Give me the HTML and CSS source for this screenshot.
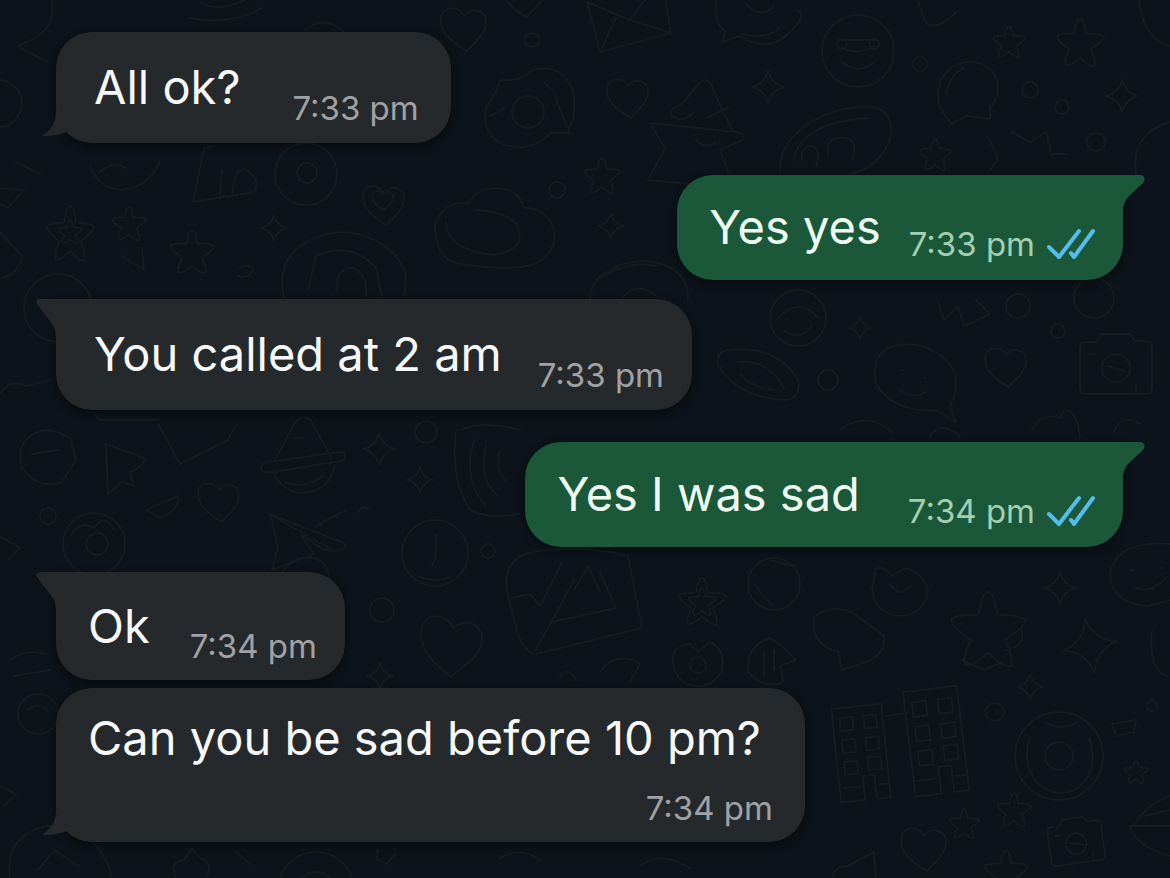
FILE: index.html
```html
<!DOCTYPE html>
<html lang="en">
  <head>
    <meta charset="UTF-8" />
    <meta name="viewport" content="width=device-width, initial-scale=1.0" />
    <title>Chat</title>
    <link rel="stylesheet" href="styles.css">
  </head>
  <body>
    <!-- Doodle wallpaper -->
    <svg class="wallpaper" viewBox="0 0 1170 878" preserveAspectRatio="xMidYMid slice" aria-hidden="true">
      <defs>
        <path id="star" d="M0-20Q3-20 5-8Q17-8 20-5Q20-2 9 5Q14 16 12 19Q8 20 0 12Q-9 20-12 18Q-14 16-9 5Q-20-2-19-6Q-16-8-5-8Q-3-20 0-20Z" />
        <path id="sparkle" d="M0-16Q3-3 16 0Q3 3 0 16Q-3 3-16 0Q-3-3 0-16Z" />
        <path id="heart" d="M3 21C-10 14-22 4-21-8C-20-20-5-21 0-11C6-20 21-17 20-4C19 7 8 14 3 21Z" />
        <path id="cloud" d="M-58 8C-64-12-44-28-26-24C-16-46 24-46 30-20C54-22 70 6 54 26C40 46-6 40-34 36C-48 34-56 24-58 8Z" />
        <g id="donut">
          <circle r="44" />
          <path d="M-30-16C-38 12-22 36 2 37C28 36 40 8 30-17M-14-34Q2-24 18-34" />
          <circle r="14" />
        </g>
        <g id="camera">
          <path d="M-36-18Q-36-24-30-24H-19L-15-32H14L19-25H30Q36-24 36-18V22Q36 28 30 28H-30Q-36 28-36 22Z" />
          <circle r="14" cy="2" />
          <path d="M-9 0L9 5M20 18V26M-27-12H-20" />
        </g>
        <g id="smile">
          <path d="M-38-22C-28-42 12-40 32-18C48 2 36 20 34 28L40 42L20 30C-10 34-54 14-38-22Z" />
          <path d="M-14-10h2M8-2h2M-16 10Q-2 20 10 12" />
        </g>
        <g id="clock">
          <circle r="33" />
          <path d="M1-18V4L-3 12M-16 24Q0 30 16 24" />
        </g>
        <g id="plane">
          <path d="M-38-36L38-6Q36 4 16 0L-8-16L6 4L-36 20L-30-4Z" />
          <path d="M-38-36L24 0" />
        </g>
        <g id="planet">
          <path d="M-28-4Q-18-22-9-40Q0-52 9-42L29-5M-29 6C-24 36 24 38 32 2" />
          <path d="M-42 4Q-42-2-28-3L36-12Q44-12 42-6Q40-2 30-2L-28 8Q-42 10-42 4Z" />
          <path d="M-18 18Q0 26 20 12M-8-26h8" />
        </g>
        <g id="block">
          <path d="M-26-46H24V48H10V24H-2V48H-26Z" />
          <path d="M-19-36h13v13h-13ZM5-36h13v13h-13ZM-19-14h13v13h-13ZM5-14h13v13h-13ZM-19 8h13v13h-13ZM5 6h13v13h-13ZM-24 34h18M14 34h10" />
        </g>
      </defs>

      <g class="doodles">
        <!-- top edge -->
        <path d="M50-8Q62 30 22 44Q14 46 28 52L48 62M190 18Q230 26 262 8M200 2Q220 14 248-2M305 30Q324 14 344 32" />
        <use href="#heart" transform="translate(464 28) scale(1.1)" />
        <use href="#heart" transform="translate(524 -4)" />
        <path d="M587 2L600 52L671 33L665-4M587 2L630 20L648-4M630 20L671 33M616 18L602 48" />
        <path d="M716 2Q714 26 726 31L722 42L740 36Q770 56 794 28Q806 16 798 10M746 4Q760 20 774 6M742 34Q766 40 780 28" />
        <circle cx="858" cy="51" r="36" />
        <path d="M842 40H876M842 48Q858 56 874 46M842 62Q858 76 874 62" />
        <circle cx="842" cy="44" r="5" />
        <circle cx="874" cy="44" r="5" />
        <path d="M918 0L926 24Q940 30 956 12M1139 0Q1144 40 1170 46" />
        <use href="#star" transform="translate(1009 42) scale(.8)" />
        <use href="#star" transform="translate(1080 43) scale(1.2)" />
        <circle cx="920" cy="64" r="7" />
        <circle cx="532" cy="40" r="7" />
        <circle cx="1030" cy="90" r="8" />
        <circle cx="1062" cy="107" r="7" />
        <circle cx="557" cy="190" r="8" />
        <path d="M950 122C924 94 944 60 972 62C1000 64 1004 94 990 108L990 119L966 116L951 124ZM946 94Q950 74 964 68" />

        <!-- upper middle -->
        <path d="M496 92L500 80Q522 82 532 70Q566 62 574 96Q576 122 568 128L570 133H550C530 158 478 150 486 108Z" />
        <circle cx="528" cy="112" r="16" />
        <path d="M554 94L566 124M544 82L552 90M490 116L504 108" />
        <use href="#heart" transform="translate(628 97)" />
        <path d="M672 116Q668 108 680 106L700 82Q710 76 714 92L732 130M672 116Q682 124 694 112M706 118L728 108" />
        <path d="M650 123L736 132Q750 136 738 142L720 150L728 172M650 123L665 148L648 180L690 184M696 140Q706 150 716 142" />
        <use href="#sparkle" transform="translate(768 87)" />
        <use href="#star" transform="translate(602 176) scale(.9)" />
        <use href="#sparkle" transform="translate(611 226) scale(.8)" />
        <path d="M780 172C776 130 838 100 878 108C906 122 886 168 850 174M794 160Q800 122 870 118M802 160Q800 146 812 146Q822 150 816 166M828 154Q826 136 844 138Q860 140 852 160" />
        <use href="#sparkle" transform="translate(1122 96)" />
        <use href="#star" transform="translate(935 155) scale(.8)" />
        <circle cx="1096" cy="142" r="9" />
        <path d="M1012 132L1030 142L1046 132L1052 156M1170 122Q1130 134 1136 174M990 140L998 160L990 170M1054 154L1066 154" />
        <use href="#cloud" transform="translate(494 228)" />
        <path d="M446 222Q446 250 494 255Q526 250 518 226Q508 212 476 210" />

        <!-- upper left -->
        <path d="M0 80Q20 82 22 104Q18 126 0 127M16 162L40 174M0 188L24 190L8 208L0 204M0 232L22 256Q18 274 2 278" />
        <path d="M90 166Q98 188 122 190Q152 186 160 160M100 172Q112 160 126 168M204 148L193 202L254 192Q262 180 246 170Q236 166 232 194M204 148L214 146M222 170L220 194" />
        <circle cx="306" cy="174" r="31" />
        <circle cx="307" cy="173" r="10" />
        <use href="#heart" transform="translate(384 204)" />
        <use href="#heart" transform="translate(383 200) scale(.5)" />
        <use href="#star" transform="translate(70 234) scale(1.2 1.4)" />
        <use href="#star" transform="translate(70 232) scale(.6)" />
        <use href="#star" transform="translate(129 224) scale(.85)" />
        <use href="#star" transform="translate(192 252) scale(1.1)" />
        <use href="#sparkle" transform="translate(274 228) scale(.8)" />
        <path d="M122 256L144 270L142 248M240 268Q248 262 254 270Q246 280 238 276" />
        <path d="M284 298Q276 260 304 244Q340 222 374 240Q414 260 404 296M308 290L316 256Q350 240 376 268L382 298M336 292Q336 266 354 268Q368 276 366 296" />
        <circle cx="58" cy="308" r="34" />

        <!-- middle band -->
        <path d="M590 304C584 254 690 242 688 300M604 276Q630 260 656 266M622 298Q636 280 656 296" />
        <circle cx="798" cy="318" r="28" />
        <path d="M778 318Q800 296 818 318M784 330Q800 342 812 326" />
        <path d="M728 350Q776 344 798 380Q802 398 786 400Q736 398 718 364Q716 352 728 350ZM738 362Q770 360 784 388M740 374Q752 388 774 390" />
        <circle cx="828" cy="380" r="10" />
        <use href="#sparkle" transform="translate(860 328) scale(.7)" />
        <path d="M938 302L944 320L958 306L964 326L990 314L976 300" />
        <circle cx="1018" cy="306" r="12" />
        <circle cx="1058" cy="331" r="7" />
        <circle cx="1094" cy="298" r="20" />
        <use href="#smile" transform="translate(916 380)" />
        <use href="#heart" transform="translate(1006 366)" />
        <use href="#camera" transform="translate(1116 366)" />
        <path d="M1032 430Q1040 412 1060 418Q1068 400 1078 424L1080 438M1114 432Q1120 412 1140 424M0 394Q10 378 26 386L52 380" />
        <path d="M840 430Q868 410 892 432M930 436Q940 420 960 436" />

        <!-- lower left -->
        <path d="M30 436Q46 424 70 438L76 460L62 482Q38 490 22 468Q16 448 30 436ZM32 454L58 450" />
        <path d="M106 444L144 458Q146 464 130 472L134 486L122 482L108 494ZM158 424L180 464L228 440L234 428M92 412L100 420H158" />
        <use href="#planet" transform="translate(303 464)" />
        <use href="#sparkle" transform="translate(379 449)" />
        <use href="#heart" transform="translate(219 501)" />
        <path d="M146 510L178 496Q180 510 160 518Z" />
        <use href="#sparkle" transform="translate(420 480) scale(.8)" />
        <circle cx="426" cy="432" r="11" />
        <path d="M456 430Q450 480 470 510Q490 520 520 514M462 430Q480 420 520 430M474 440Q462 480 486 506M486 446Q478 480 498 496M500 450Q494 466 506 482" />
        <circle cx="48" cy="516" r="8" />
        <circle cx="94" cy="544" r="31" />
        <circle cx="97" cy="544" r="11" />
        <path d="M70 536Q80 520 94 528Q104 512 114 530M0 536L20 548L8 560" />
        <use href="#plane" transform="translate(308 550)" />
        <path d="M316 526L346 510M358 512Q362 504 370 510M282 572Q296 552 320 560Q332 570 328 584" />
        <use href="#clock" transform="translate(435 553)" />
        <circle cx="488" cy="551" r="7" />
        <circle cx="382" cy="610" r="12" />
        <use href="#heart" transform="translate(451 645) rotate(8) scale(1.5)" />
        <path d="M10 660Q26 648 44 654M14 676L50 670" />
        <use href="#sparkle" transform="translate(380 676) scale(.8)" />

        <!-- lower middle -->
        <path d="M508 596Q500 560 532 552Q580 544 628 556L642 628L536 654Q520 652 514 618ZM536 650L574 580M552 622L616 608L600 572M512 598L530 594L540 606L562 562M574 590L588 566L600 592" />
        <use href="#star" transform="translate(702 602) scale(1.2)" />
        <use href="#star" transform="translate(702 602) scale(.7)" />
        <circle cx="774" cy="584" r="26" />
        <path d="M754 584Q764 598 772 604M770 560L794 566" />
        <path d="M674 668Q668 646 690 644L698 652L710 642Q726 650 722 670Q714 686 698 686Q680 686 674 668Z" />
        <circle cx="698" cy="665" r="8" />
        <path d="M748 672Q746 646 770 638L784 648L796 660L780 666L784 682Q764 690 748 672ZM764 652V676M774 650V670" />
        <path d="M600 672Q616 650 640 664L630 682M560 678Q566 664 576 680" />

        <!-- lower right -->
        <path d="M876 568Q884 566 892 576L906 568Q924 574 928 590Q926 614 900 616Q874 614 872 588ZM890 584Q900 600 912 584" />
        <path d="M814 618Q826 604 852 612L884 636Q886 654 866 662L842 670L838 652Q810 644 814 618Z" />
        <use href="#star" transform="translate(988 630) scale(1.9)" />
        <path d="M1022 630Q1026 646 1006 650M962 660L984 670L1002 662" />
        <use href="#sparkle" transform="translate(1060 588)" />
        <use href="#sparkle" transform="translate(1090 646) rotate(-10) scale(1.7)" />
        <path d="M1170 544Q1116 540 1110 574Q1112 604 1148 606L1170 600M1134 586Q1148 596 1166 578M1130 570h4M1160 568h4M1152 630Q1148 668 1166 676" />
        <use href="#sparkle" transform="translate(1030 687) scale(.8)" />
        <circle cx="995" cy="712" r="9" />
        <circle cx="1152" cy="706" r="5" />
        <use href="#block" transform="translate(862 752) rotate(-6)" />
        <use href="#block" transform="translate(937 740) rotate(-7) scale(1.08 1.12)" />
        <path d="M886 716L908 713" />
        <use href="#donut" transform="translate(1059 756)" />
        <path d="M1112 724L1136 720L1134 732L1116 736Z" />
        <use href="#star" transform="translate(1136 772) scale(.6)" />
        <use href="#star" transform="translate(964 824) scale(.75)" />
        <use href="#star" transform="translate(1014 810) scale(.85)" />
        <use href="#heart" transform="translate(924 848) scale(1.1)" />
        <use href="#camera" transform="translate(1076 842) rotate(-8) scale(.75)" />
        <use href="#star" transform="translate(1006 872) scale(1.1)" />
        <path d="M1170 796Q1146 804 1130 830Q1144 850 1170 856M1130 826H1170M1144 816L1170 810M832 878Q834 866 848 866L874 852L876 878" />

        <!-- bottom left -->
        <circle cx="38" cy="714" r="20" />
        <path d="M28 710Q40 700 48 712M0 786L16 794L4 806" />
        <path d="M10 878Q4 836 46 826Q100 828 112 878M38 870L54 850L78 866" />
        <path d="M176 878Q168 862 184 860L192 848L200 858Q214 862 206 878M236 852L250 864" />
        <circle cx="316" cy="890" r="38" />
        <circle cx="316" cy="892" r="20" />
        <path d="M378 850L376 858L386 864L396 854M500 858Q520 846 540 860M640 866Q660 850 690 868" />
      </g>
    </svg>

    <main class="chat">
      <ol class="messages">
        <li class="message received tail-bottom">
          <svg class="tail" viewBox="0 0 32 32" aria-hidden="true"><path d="M14 0C14 12 9 19 1 24Q0 25 2 25Q14 25 25 21L31 0Z" /></svg>
          <p class="text">All ok?</p>
          <span class="meta"><time>7:33 pm</time></span>
        </li>
        <li class="message sent">
          <svg class="tail" viewBox="0 0 24 40" aria-hidden="true"><path d="M0 0H20Q26 2 22 8L8 21Q2 27 2 36V40H0Z" /></svg>
          <p class="text">Yes yes</p>
          <span class="meta"><time>7:33 pm</time>
            <svg class="ticks" viewBox="0 0 48 32" role="img" aria-label="Read"><path d="M2 19L12 29L32 3M24 25L27 29L46 3" /></svg>
          </span>
        </li>
        <li class="message received tail-top">
          <svg class="tail" viewBox="0 0 24 40" aria-hidden="true"><path d="M24 0H4Q-1 1 1 5L16 25Q20 30 20 40H24Z" /></svg>
          <p class="text">You called at 2 am</p>
          <span class="meta"><time>7:33 pm</time></span>
        </li>
        <li class="message sent roomy">
          <svg class="tail" viewBox="0 0 24 40" aria-hidden="true"><path d="M0 0H20Q26 2 22 8L8 21Q2 27 2 36V40H0Z" /></svg>
          <p class="text">Yes I was sad</p>
          <span class="meta"><time>7:34 pm</time>
            <svg class="ticks" viewBox="0 0 48 32" role="img" aria-label="Read"><path d="M2 19L12 29L32 3M24 25L27 29L46 3" /></svg>
          </span>
        </li>
        <li class="message received tail-top compact">
          <svg class="tail" viewBox="0 0 24 40" aria-hidden="true"><path d="M24 0H4Q-1 1 1 5L16 25Q20 30 20 40H24Z" /></svg>
          <p class="text">Ok</p>
          <span class="meta"><time>7:34 pm</time></span>
        </li>
        <li class="message received tail-bottom compact stacked">
          <svg class="tail" viewBox="0 0 32 32" aria-hidden="true"><path d="M14 0C14 12 9 19 1 24Q0 25 2 25Q14 25 25 21L31 0Z" /></svg>
          <p class="text">Can you be sad before 10 pm?</p>
          <span class="meta"><time>7:34 pm</time></span>
        </li>
      </ol>
    </main>
  </body>
</html>
```
FILE: styles.css
```css
body {
  margin: 0;
  min-height: 100vh;
  position: relative;
  overflow-x: hidden;
  background-color: #0c131a;
  font-family: Inter, "Liberation Sans", Arial, sans-serif;
}

/* Wallpaper behind the conversation */
.wallpaper {
  position: absolute;
  top: 0;
  left: 0;
  width: 100%;
  height: 100%;
}

.doodles {
  fill: none;
  stroke: #141d20;
  stroke-width: 2;
  stroke-linecap: round;
  stroke-linejoin: round;
}

.wallpaper path,
.wallpaper circle {
  vector-effect: non-scaling-stroke;
}

.chat {
  position: relative;
  padding: 32px 47px 32px 56px;
}

.messages {
  list-style: none;
  margin: 0;
  padding: 0;
  display: flex;
  flex-direction: column;
  align-items: flex-start;
}

.message {
  position: relative;
  display: flex;
  align-items: flex-start;
  border-radius: 36px;
  box-shadow: 0 3px 10px rgba(0, 0, 0, 0.45);
}

.text {
  margin: 0;
  font-size: 47px;
  line-height: 60px;
}

.meta {
  display: flex;
  align-items: center;
  gap: 12px;
  font-size: 33px;
  line-height: 40px;
  white-space: nowrap;
}

.tail {
  position: absolute;
  fill: inherit;
}

/* Messages from the other person */
.received {
  gap: 36px;
  padding: 25px 28px 15px 38px;
  background-color: #25292c;
  fill: #25292c;
}

.received .text {
  color: #f7f8fa;
}

.received .meta {
  margin-top: 31px;
  color: #a0a2a6;
}

.tail-bottom {
  gap: 52px;
  padding-right: 32px;
}

.compact {
  gap: 40px;
  margin-top: 6px;
  padding: 24px 28px 14px 32px;
}

.compact .meta {
  margin-top: 30px;
}

/* Own messages */
.sent {
  align-self: flex-end;
  margin: 32px 0 19px;
  gap: 28px;
  padding: 22px 28px 16px 32px;
  border-top-right-radius: 0;
  background-color: #1b5839;
  fill: #1b5839;
}

.sent .text {
  color: #eefbf1;
}

.sent .meta {
  margin-top: 27px;
  color: #a3cfb3;
}

.sent .tail {
  top: 0;
  left: 100%;
  width: 24px;
  height: 40px;
  margin-left: -2px;
}

.ticks {
  width: 48px;
  height: 32px;
  fill: none;
  stroke: #53bdeb;
  stroke-width: 4;
  stroke-linecap: round;
  stroke-linejoin: round;
}

.roomy {
  gap: 48px;
}

.tail-top {
  border-top-left-radius: 0;
}

.tail-top .tail {
  top: 0;
  left: -20px;
  width: 24px;
  height: 40px;
}

.tail-bottom .tail {
  bottom: 0;
  left: -14px;
  width: 32px;
  height: 32px;
}

/* Long message with the time on its own line */
.stacked {
  flex-direction: column;
  gap: 0;
  margin-top: 8px;
  padding-top: 20px;
  padding-right: 32px;
}

.stacked .text {
  margin-right: 12px;
}

.stacked .meta {
  align-self: flex-end;
  margin-top: 20px;
}
```
